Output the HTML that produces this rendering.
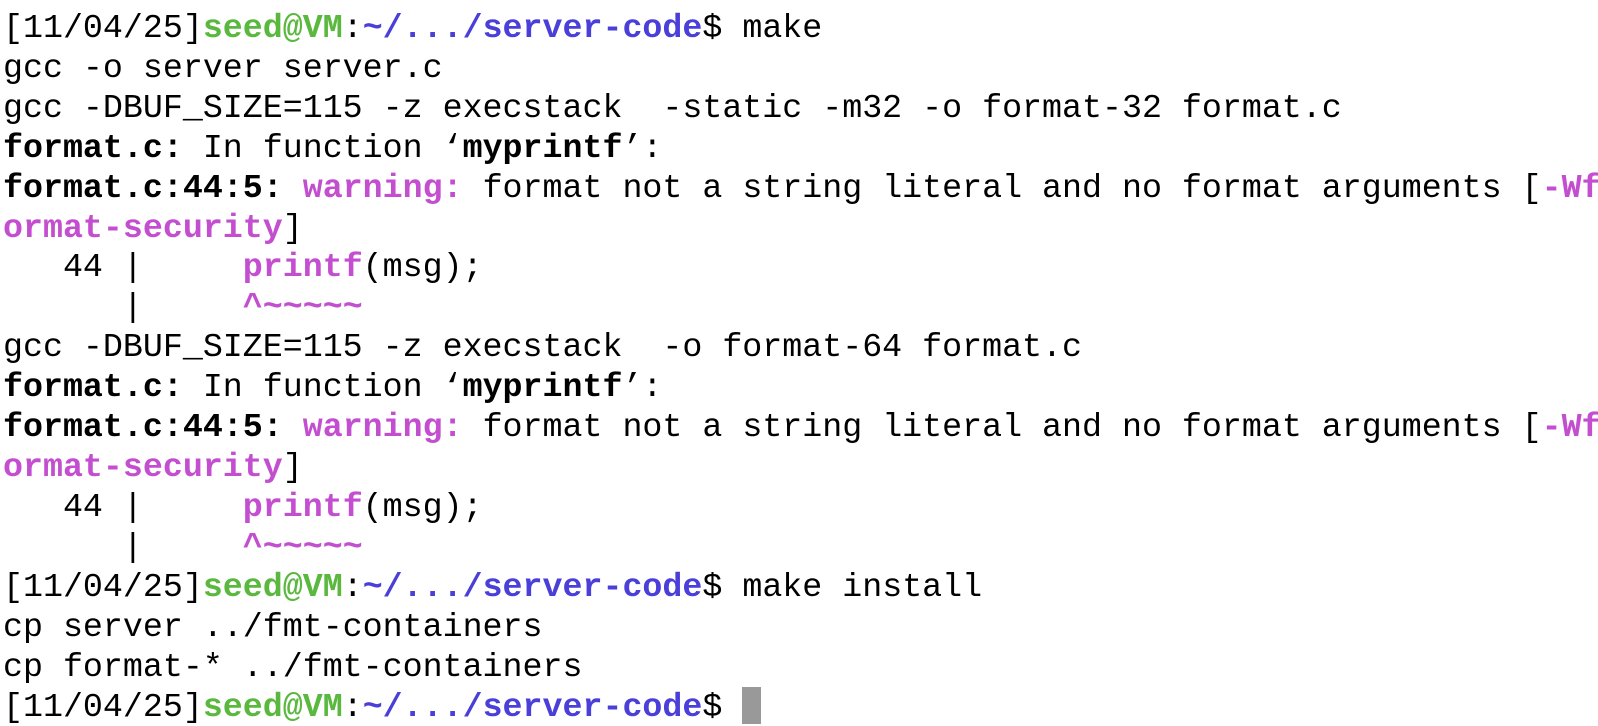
<!DOCTYPE html>
<html><head><meta charset="utf-8"><style>
html,body{margin:0;background:#fff;width:1598px;height:726px;overflow:hidden}
pre{margin:0;padding:9px 0 0 3px;font-family:"Liberation Mono",monospace;font-size:33.3px;line-height:39.9px;color:#000;white-space:pre}
b{font-weight:bold}
.g{color:#5bb83f;font-weight:bold}.u{color:#4a3fd8;font-weight:bold}.m{color:#c34fd0;font-weight:bold}
.cur{display:inline-block;width:19px;height:37px;background:#999;vertical-align:-8px}
</style></head><body><pre>[11/04/25]<span class="g">seed@VM</span>:<span class="u">~/.../server-code</span>$ make
gcc -o server server.c
gcc -DBUF_SIZE=115 -z execstack  -static -m32 -o format-32 format.c
<b>format.c:</b> In function ‘<b>myprintf</b>’:
<b>format.c:44:5:</b> <span class="m">warning:</span> format not a string literal and no format arguments [<span class="m">-Wf</span>
<span class="m">ormat-security</span>]
   44 |     <span class="m">printf</span>(msg);
      |     <span class="m">^~~~~~</span>
gcc -DBUF_SIZE=115 -z execstack  -o format-64 format.c
<b>format.c:</b> In function ‘<b>myprintf</b>’:
<b>format.c:44:5:</b> <span class="m">warning:</span> format not a string literal and no format arguments [<span class="m">-Wf</span>
<span class="m">ormat-security</span>]
   44 |     <span class="m">printf</span>(msg);
      |     <span class="m">^~~~~~</span>
[11/04/25]<span class="g">seed@VM</span>:<span class="u">~/.../server-code</span>$ make install
cp server ../fmt-containers
cp format-* ../fmt-containers
[11/04/25]<span class="g">seed@VM</span>:<span class="u">~/.../server-code</span>$ <span class="cur"></span></pre></body></html>
